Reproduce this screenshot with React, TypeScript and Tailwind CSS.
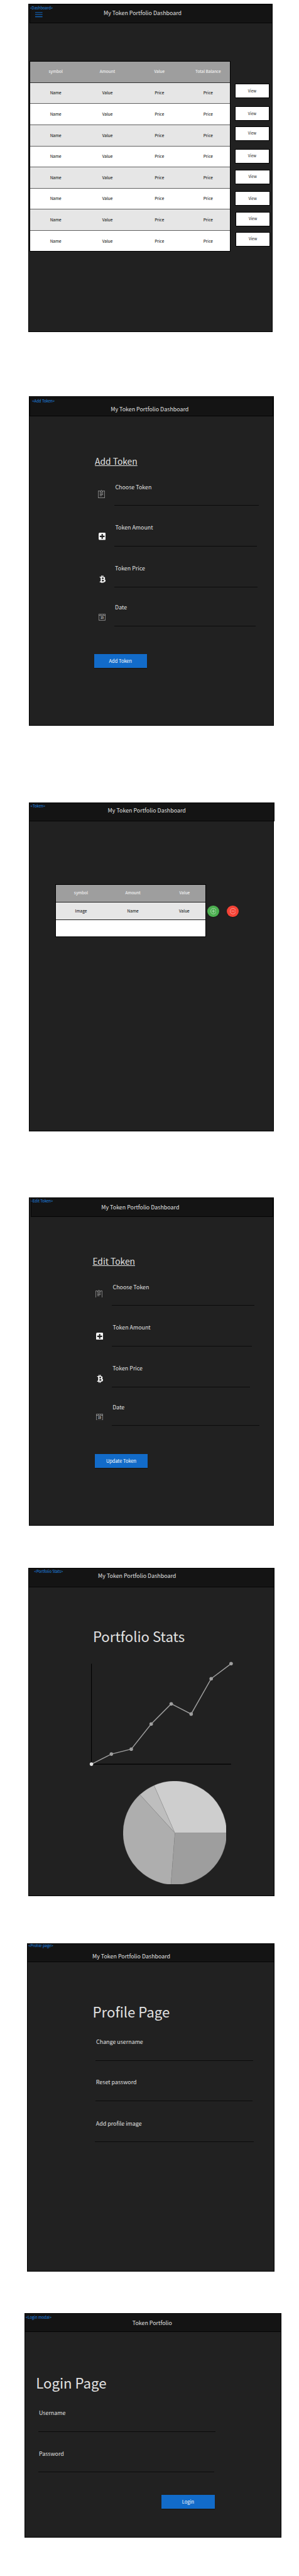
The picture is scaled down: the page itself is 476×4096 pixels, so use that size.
import type { ReactNode } from "react";
import { FaBtc } from "react-icons/fa";

type HeaderProps = {
  tag: string;
  title?: string;
  box: string;
  columns: string;
  tagPos: string;
  titlePos: string;
  children?: ReactNode;
};

function Header({ tag, title = "My Token Portfolio Dashboard", box, columns, tagPos, titlePos, children }: HeaderProps) {
  return (
    <header
      className={`grid shrink-0 items-start bg-[#141414] outline-1 -outline-offset-1 outline-[#050505] ${box} ${columns}`}
    >
      <div className={`flex flex-col items-start text-[5.95px] leading-[10px] text-[#1e88e5] ${tagPos}`}>
        <span>{tag}</span>
        {children}
      </div>
      <h1 className={`text-[8.88px] leading-[10px] text-[#e0e0e0] ${titlePos}`}>{title}</h1>
    </header>
  );
}

function Frame({ box, children }: { box: string; children: ReactNode }) {
  return (
    <section
      className={`flex shrink-0 flex-col items-start bg-[#212121] outline-1 -outline-offset-1 outline-black ${box}`}
    >
      {children}
    </section>
  );
}

function MenuIcon() {
  return (
    <svg className="mt-[1.2px] ml-[8.8px] h-[9px] w-[11.6px]" viewBox="0 0 11.6 9" stroke="#126bc9" strokeWidth="1.1">
      <path d="M0 1H11.6M0 4.3H11.6M0 7.6H11.6" />
    </svg>
  );
}

function ClipboardIcon() {
  return (
    <svg className="mt-[8.8px] ml-[6.8px] h-[12.9px] w-[11px]" viewBox="0 0 20 23.4" fill="none" stroke="#d6d6d6" strokeWidth="1.1">
      <path d="M6 3H.6V22.8H19.4V3H14" />
      <path d="M5.6 6.4 7.4 2.9H8.4C8.4 -.1 11.6 -.1 11.6 2.9H12.6L14.4 6.4Z" />
      <path d="M5 10.4H15M5 13.6H15M5 16.8H11.6" />
    </svg>
  );
}

function PlusIcon() {
  return (
    <svg className="mt-[12.7px] ml-[7.3px] h-[11.6px] w-[11.4px]" viewBox="0 0 21 21">
      <rect width="21" height="21" rx="3.4" fill="#f7f7f7" />
      <path d="M10.5 3.6V17.6M3.4 10.6H17.6" stroke="#212121" strokeWidth="3.8" />
    </svg>
  );
}

function CalendarIcon() {
  return (
    <svg className="mt-[15px] ml-[7.8px] h-[10.6px] w-[11px]" viewBox="0 0 20 19.3" fill="none" stroke="#d6d6d6" strokeWidth="1.1">
      <path d="M.6 .6H19.4V18.7H.6ZM.6 4.6H19.4" />
      <path d="M6 2.6H7.4M12.6 2.6H14" stroke="#ffffff" />
      <text
        x="10"
        y="14.2"
        textAnchor="middle"
        fontSize="8.2"
        fontWeight="700"
        fill="#d6d6d6"
        stroke="none"
        className="font-['Liberation_Sans',sans-serif]"
      >
        15
      </text>
    </svg>
  );
}

function BitcoinIcon() {
  return <FaBtc className="mt-[15.3px] ml-[7.9px] h-[12.7px] w-[12.7px] text-[#f7f7f7]" />;
}

type FieldProps = { label: string; height: string; line: string; icon?: ReactNode; labelPos?: string };

function Field({ label, height, line, icon, labelPos = "ml-[1.3px]" }: FieldProps) {
  return (
    <div className={`flex shrink-0 items-start ${height}`}>
      {icon && <div className="flex w-[32.6px] shrink-0">{icon}</div>}
      <div className="flex flex-col items-start">
        <label className={`text-[8.88px] leading-[10px] whitespace-nowrap text-[#e0e0e0] ${labelPos}`}>{label}</label>
        <div className={`mt-[23.5px] h-px bg-[#0b0b0b] ${line}`} />
      </div>
    </div>
  );
}

function PrimaryButton({ label, pos }: { label: string; pos: string }) {
  return (
    <button
      className={`flex h-[22px] w-[84.2px] shrink-0 items-center justify-center bg-[#126bc9] text-[7.45px] leading-[10px] text-white shadow-[0_1px_1px_rgba(0,0,0,0.35)] ${pos}`}
    >
      {label}
    </button>
  );
}

const rows = [0, 1, 2, 3, 4, 5, 6, 7];
const viewButtons = ["", "mt-[13.5px]", "mt-[9px]", "mt-[13.4px]", "mt-[10px] ml-[0.6px]", "mt-[11.7px] ml-[0.6px]", "mt-[10px] ml-[1.2px]", "mt-[9.4px] ml-[1.2px]"];

function DashboardFrame() {
  const cols = "grid grid-cols-[82.3px_82.4px_83.2px_71.9px] items-center text-center pb-[1.5px]";
  return (
    <Frame box="mt-[5.5px] ml-[44.6px] h-[522.6px] w-[389.5px]">
      <Header
        tag="<Dashboard>"
        box="mt-[1.1px] ml-[2.7px] h-[30.1px] w-[386.3px]"
        columns="grid-cols-[117.7px_auto]"
        tagPos="mt-[1.5px]"
        titlePos="mt-[9px]"
      >
        <MenuIcon />
      </Header>
      <div className="mt-[60.4px] ml-[2.9px] flex items-start">
        <div className="h-[302.6px] w-[319.8px] text-[6.5px] leading-[10px] outline-1 -outline-offset-1 outline-black">
          <div className={`h-[33.7px] bg-[#9e9e9e] text-white ${cols}`}>
            <span>symbol</span>
            <span>Amount</span>
            <span>Value</span>
            <span>Total Balance</span>
          </div>
          {rows.map((r) => (
            <div
              key={r}
              className={`h-[33.61px] border-t text-black ${cols} ${r === 0 ? "border-[#2e2e2e]" : "border-[#5e5e5e]"} ${r % 2 ? "bg-white" : "bg-[#e6e6e6]"}`}
            >
              <span>Name</span>
              <span>Value</span>
              <span>Price</span>
              <span>Price</span>
            </div>
          ))}
        </div>
        <div className="mt-[36.1px] ml-[6.4px] flex flex-col items-start">
          {viewButtons.map((pos, i) => (
            <button
              key={i}
              className={`flex h-[22.7px] w-[55.6px] items-center justify-center bg-white text-[6px] leading-[10px] text-[#212121] outline-1 -outline-offset-1 outline-black ${pos}`}
            >
              View
            </button>
          ))}
        </div>
      </div>
    </Frame>
  );
}

function AddTokenFrame() {
  return (
    <Frame box="mt-[101.6px] ml-[45.5px] h-[524.4px] w-[390.4px]">
      <Header
        tag="<Add Token>"
        box="mt-[2px] ml-[1.2px] h-[30.5px] w-[388px]"
        columns="grid-cols-[129.5px_auto]"
        tagPos="mt-[1.6px] pl-[4.6px]"
        titlePos="mt-[14.7px]"
      />
      <h2 className="mt-[60.6px] ml-[105.6px] text-[13.8px] leading-[20px] text-[#e0e0e0] underline decoration-[0.8px] underline-offset-[1px]">
        Add Token
      </h2>
      <div className="mt-[27.2px] ml-[104px] flex flex-col">
        <Field label="Choose Token" height="h-[64.3px]" line="w-[229.5px]" icon={<ClipboardIcon />} />
        <Field label="Token Amount" height="h-[65px]" line="w-[227.4px]" icon={<PlusIcon />} />
        <Field label="Token Price" height="h-[61.8px]" line="w-[228px] -ml-[0.6px]" labelPos="ml-[1px]" icon={<BitcoinIcon />} />
        <Field label="Date" height="h-[78.8px]" line="w-[224.7px]" labelPos="ml-[1px]" icon={<CalendarIcon />} />
      </div>
      <PrimaryButton label="Add Token" pos="ml-[104.2px]" />
    </Frame>
  );
}

function TokenFrame() {
  const cols = "grid h-[27.8px] grid-cols-[82.6px_82.6px_75px] items-center text-center pb-[1px]";
  return (
    <section className="mt-[121.7px] ml-[45.5px] flex h-[523.5px] shrink-0 flex-col items-start">
      <Header
        tag="<Token>"
        box="relative z-10 ml-[0.6px] h-[30.2px] w-[390.7px]"
        columns="grid-cols-[125.5px_auto]"
        tagPos="mt-[1.3px] pl-[2.5px]"
        titlePos="mt-[8.4px]"
      />
      <Frame box="-mt-[23.5px] h-[516.8px] w-[390.7px]">
        <div className="mt-[123.6px] ml-[42.2px] flex items-start">
          <div className="h-[83.7px] w-[240.2px] bg-white text-[6.5px] leading-[10px] outline-1 -outline-offset-1 outline-black">
            <div className={`bg-[#9e9e9e] text-white ${cols}`}>
              <span>symbol</span>
              <span>Amount</span>
              <span className="pl-[7px]">Value</span>
            </div>
            <div className={`border-t border-[#1c1c1c] bg-[#e6e6e6] text-black ${cols}`}>
              <span>Image</span>
              <span>Name</span>
              <span className="pl-[6px]">Value</span>
            </div>
            <div className="border-t border-[#1c1c1c]" />
          </div>
          <button className="mt-[33.6px] ml-[2.6px] flex h-[18.3px] w-[18.3px] items-center justify-center rounded-full bg-[#4caf50] shadow-[0_1px_1px_rgba(0,0,0,0.35)]">
            <svg className="h-[9.6px] w-[9.6px]" viewBox="0 0 17.4 17.4" fill="none" stroke="#ffffff" strokeOpacity="0.85">
              <circle cx="8.7" cy="8.7" r="8.1" />
              <path d="M8.7 3.5V13.9M3.5 8.7H13.9" />
            </svg>
          </button>
          <button className="mt-[33.6px] ml-[12.5px] flex h-[18.3px] w-[18.3px] items-center justify-center rounded-full bg-[#f44336] shadow-[0_1px_1px_rgba(0,0,0,0.35)]">
            <svg className="h-[9.6px] w-[9.6px]" viewBox="0 0 17.4 17.4" fill="none" stroke="#ffffff" strokeOpacity="0.85">
              <circle cx="8.7" cy="8.7" r="8.1" />
              <path d="M4.2 8.7H13.2" />
            </svg>
          </button>
        </div>
      </Frame>
    </section>
  );
}

function EditTokenFrame() {
  return (
    <Frame box="mt-[104.8px] ml-[45.5px] h-[521.7px] w-[390.4px]">
      <Header
        tag="<Edit Token>"
        box="ml-[3.1px] h-[30.6px] w-[386.7px]"
        columns="grid-cols-[112.7px_auto]"
        tagPos="mt-[0.9px]"
        titlePos="mt-[10.5px]"
      />
      <h2 className="mt-[59.9px] ml-[101.9px] text-[13.8px] leading-[20px] text-[#e0e0e0] underline decoration-[0.8px] underline-offset-[1px]">
        Edit Token
      </h2>
      <div className="mt-[27.2px] ml-[100.1px] flex flex-col">
        <Field label="Choose Token" height="h-[64.4px]" line="w-[226.8px]" icon={<ClipboardIcon />} />
        <Field label="Token Amount" height="h-[65px]" line="w-[222.8px]" icon={<PlusIcon />} />
        <Field label="Token Price" height="h-[61.7px]" line="w-[220.1px] -ml-[0.3px]" labelPos="ml-[1px]" icon={<BitcoinIcon />} />
        <Field label="Date" height="h-[79.1px]" line="w-[235px]" labelPos="ml-[1px]" icon={<CalendarIcon />} />
      </div>
      <PrimaryButton label="Update Token" pos="ml-[105.4px]" />
    </Frame>
  );
}

const points: [number, number][] = [
  [3.6, 163.1],
  [35.3, 147.1],
  [67, 139.2],
  [98.7, 99.2],
  [130.6, 67.2],
  [162.3, 83.4],
  [194.2, 27.2],
  [225.9, 3.3],
];

function StatsFrame() {
  return (
    <Frame box="mt-[67.7px] ml-[44.6px] h-[521.7px] w-[392.2px]">
      <Header
        tag="<Portfolio Stats>"
        box="h-[30.4px] w-[392.2px]"
        columns="grid-cols-[111.5px_auto]"
        tagPos="mt-[0.9px] pl-[10px]"
        titlePos="mt-[7.1px]"
      />
      <h2 className="mt-[61.9px] ml-[103.3px] text-[22.2px] leading-[30px] text-[#e0e0e0]">Portfolio Stats</h2>
      <svg className="mt-[26.2px] ml-[97.4px] h-[167px] w-[230px] shrink-0" viewBox="0 0 230 167">
        <path d="M3.6 3.6V163.1H225.9" fill="none" stroke="#000000" strokeWidth="1.1" />
        <polyline points={points.map((p) => p.join(",")).join(" ")} fill="none" stroke="#9e9e9e" strokeWidth="1.5" />
        {points.map(([x, y], i) => (
          <circle key={i} cx={x} cy={y} r="2.8" fill={i === 0 ? "#e0e0e0" : "#9e9e9e"} />
        ))}
      </svg>
      <svg className="mt-[22.6px] ml-[151.1px] h-[164.8px] w-[164.8px] shrink-0" viewBox="-82.4 -82.4 164.8 164.8">
        <g stroke="#8a8a8a" strokeWidth="0.3">
          <path d="M0 0H82.4A82.4 82.4 0 0 1 -6.4 82.2Z" fill="#9e9e9e" />
          <path d="M0 0L-6.4 82.2A82.4 82.4 0 0 1 -55.6 -60.8Z" fill="#aeaeae" />
          <path d="M0 0L-55.6 -60.8A82.4 82.4 0 0 1 -33.1 -75.5Z" fill="#bebebe" />
          <path d="M0 0L-33.1 -75.5A82.4 82.4 0 0 1 82.4 0Z" fill="#cecece" />
        </g>
      </svg>
    </Frame>
  );
}

function ProfileFrame() {
  return (
    <Frame box="mt-[74.5px] ml-[43.4px] h-[522px] w-[393.4px]">
      <Header
        tag="<Profile page>"
        box="h-[30.7px] w-[393.4px]"
        columns="grid-cols-[103.6px_auto]"
        tagPos="-mt-[0.5px] pl-[1.8px]"
        titlePos="mt-[16.8px]"
      />
      <h2 className="mt-[62.3px] ml-[104.2px] text-[22.2px] leading-[30px] text-[#e0e0e0]">Profile Page</h2>
      <div className="mt-[29.4px] ml-[108.4px] flex flex-col">
        <Field label="Change username" height="h-[64.3px]" line="w-[251.6px]" />
        <Field label="Reset password" height="h-[65.3px]" line="w-[250.4px]" labelPos="ml-[1px]" />
        <Field label="Add profile image" height="h-[65px]" line="w-[253.2px] -ml-[0.6px]" labelPos="ml-[1px]" />
      </div>
    </Frame>
  );
}

function LoginFrame() {
  return (
    <Frame box="mt-[66.3px] ml-[39.2px] h-[357.4px] w-[408.8px]">
      <Header
        tag="<Login modal>"
        title="Token Portfolio"
        box="h-[30px] w-[409.2px]"
        columns="grid-cols-[171.6px_auto]"
        tagPos="mt-[1.8px] pl-[1.8px]"
        titlePos="mt-[11.3px]"
      />
      <h2 className="mt-[65px] ml-[18px] text-[22.2px] leading-[30px] text-[#e0e0e0]">Login Page</h2>
      <div className="mt-[29.4px] ml-[21.8px] flex flex-col">
        <Field label="Username" height="h-[64.6px]" line="w-[281.7px]" labelPos="ml-[1px]" />
        <Field label="Password" height="h-[70px]" line="w-[280.2px]" labelPos="ml-[1px]" />
      </div>
      <PrimaryButton label="Login" pos="ml-[218.2px]" />
    </Frame>
  );
}

export default function App() {
  return (
    <main className="flex h-[4096px] w-[476px] flex-col items-start overflow-hidden bg-white font-['Noto_Sans_CJK_SC','Noto_Sans',sans-serif]">
      <DashboardFrame />
      <AddTokenFrame />
      <TokenFrame />
      <EditTokenFrame />
      <StatsFrame />
      <ProfileFrame />
      <LoginFrame />
    </main>
  );
}
